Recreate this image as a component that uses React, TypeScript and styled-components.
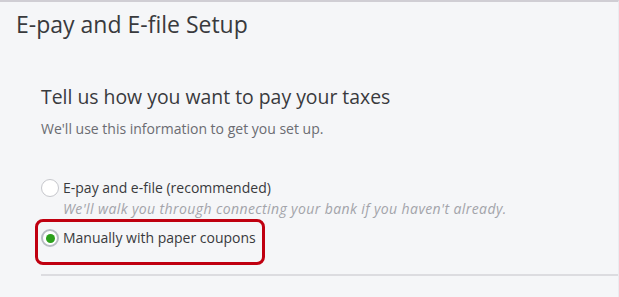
import React from "react";
import styled, { createGlobalStyle } from "styled-components";

const Global = createGlobalStyle`
  html, body { margin: 0; padding: 0; background: #f5f6f8; }
  body { font-family: "Open Sans", "Liberation Sans", sans-serif; }
`;

const Page = styled.div`
  width: 619px;
  height: 297px;
  box-sizing: border-box;
  border-top: 2px solid #d0ced4;
  border-right: 1px solid #ebebef;
  background: #f5f6f8;
  display: flex;
  flex-direction: column;
  overflow: hidden;
`;

const PageTitle = styled.h1`
  margin: 0;
  padding: 7px 0 0 16px;
  font-size: 23px;
  font-weight: 400;
  color: #393a3d;
  line-height: 30px;
`;

const Section = styled.div`
  padding: 45px 0 0 41px;
  display: flex;
  flex-direction: column;
`;

const Heading = styled.h2`
  margin: 0;
  font-size: 19.4px;
  font-weight: 400;
  color: #393a3d;
  line-height: 26px;
`;

const Sub = styled.p`
  margin: 10px 0 0;
  font-size: 14px;
  color: #6b6c72;
  line-height: 18px;
`;

const Options = styled.div`
  margin-top: 41px;
  display: flex;
  flex-direction: column;
`;

const OptionRow = styled.label`
  display: flex;
  align-items: flex-start;
  gap: 4px;
`;

const Circle = styled.span<{ $checked?: boolean }>`
  width: 18px;
  height: 18px;
  border-radius: 50%;
  border: 1px solid #c6c7cc;
  background: #fff;
  box-sizing: border-box;
  flex: none;
  display: flex;
  align-items: center;
  justify-content: center;
  ${(p) => p.$checked && `border: 2px solid #b8bcc3;`}
  &::after {
    content: "";
    display: ${(p) => (p.$checked ? "block" : "none")};
    width: 9px;
    height: 9px;
    border-radius: 50%;
    background: #2ca01c;
  }
`;

const Texts = styled.div`
  display: flex;
  flex-direction: column;
`;

const Label = styled.span`
  font-size: 14px;
  color: #393a3d;
  line-height: 18px;
`;

const Hint = styled.span`
  margin-top: 3px;
  font-size: 14px;
  letter-spacing: 0.4px;
  font-style: italic;
  color: #a3a4aa;
  line-height: 18px;
`;

const Highlight = styled.div`
  margin: 1px 0 0 -6px;
  width: 230px;
  height: 46px;
  box-sizing: border-box;
  border: 3px solid #c00010;
  border-radius: 8px;
  padding: 7px 0 0 3px;
`;

const Divider = styled.hr`
  margin: 9px 0 0;
  border: none;
  border-top: 2px solid #dcdce0;
`;

export default function App() {
  return (
    <>
      <Global />
      <Page>
        <PageTitle>E-pay and E-file Setup</PageTitle>
        <Section>
          <Heading>Tell us how you want to pay your taxes</Heading>
          <Sub>We'll use this information to get you set up.</Sub>
          <Options>
            <OptionRow>
              <Circle />
              <Texts>
                <Label>E-pay and e-file (recommended)</Label>
                <Hint>We'll walk you through connecting your bank if you haven't already.</Hint>
              </Texts>
            </OptionRow>
            <Highlight>
              <OptionRow>
                <Circle $checked />
                <Texts>
                  <Label>Manually with paper coupons</Label>
                </Texts>
              </OptionRow>
            </Highlight>
          </Options>
          <Divider />
        </Section>
      </Page>
    </>
  );
}
